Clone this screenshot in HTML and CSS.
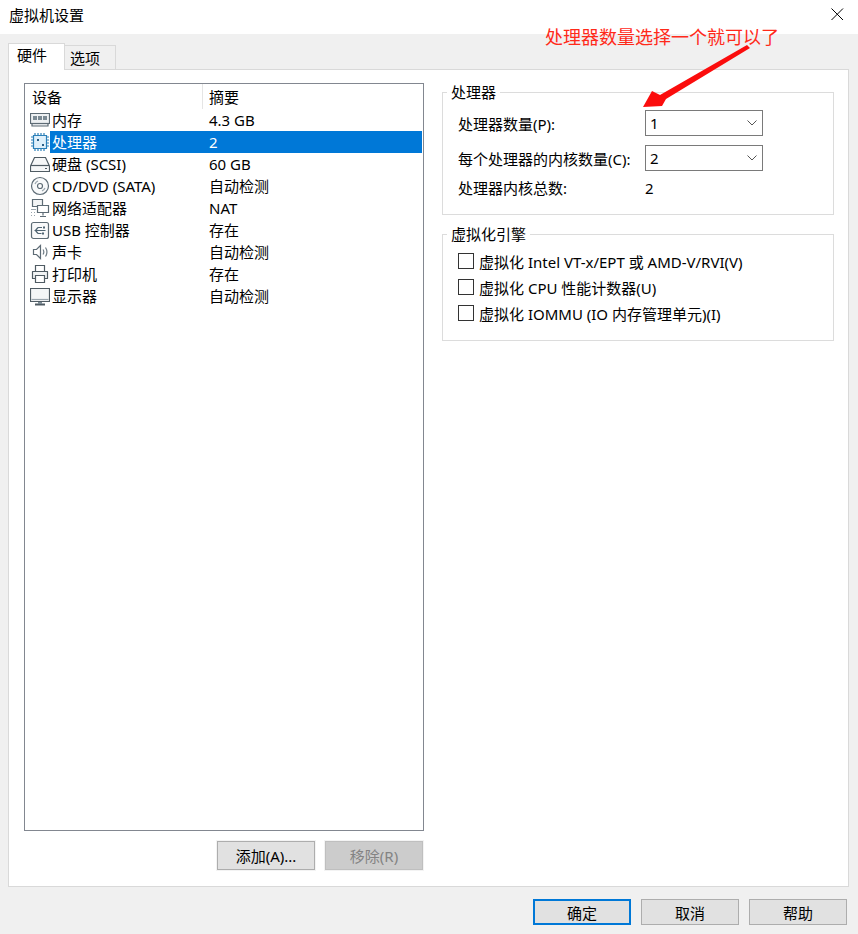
FILE: index.html
```html
<!DOCTYPE html>
<html lang="zh-CN">
<head>
    <meta charset="UTF-8">
    <title>虚拟机设置</title>
    <link rel="stylesheet" href="styles.css">
</head>
<body>
    <header class="titlebar">
        <span class="title">虚拟机设置</span>
        <svg class="close" width="14" height="14" viewBox="0 0 14 14"><path d="M1.5 1.5L13 13M13 1.5L1.5 13" stroke="#000" fill="none"/></svg>
    </header>

    <div class="tabs">
        <div class="tab tab-active">硬件</div>
        <div class="tab">选项</div>
    </div>

    <main class="panel">
        <section class="left-col">
            <div class="device-list">
                <div class="list-head">
                    <div class="head-name">设备</div>
                    <div class="head-sum">摘要</div>
                </div>
                <div class="row">
                    <svg class="icon" viewBox="0 0 20 20"><path d="M.5 3.500h19v10h-1.500v2.500H2V13.500H.5z" fill="#eef1f3" stroke="#5d6b75"/><path d="M3 6h4v4H3zM8 6h4v4H8zM13 6h4v4h-4z" fill="#7b8a94"/><path d="M1 13.500h18" stroke="#5d6b75"/></svg>
                    <span class="name">内存</span><span class="sum">4.3 GB</span>
                </div>
                <div class="row row-sel">
                    <svg class="icon" viewBox="0 0 20 20"><path d="M3.500 3.500h13v13h-13z" fill="#dff0fb" stroke="#2b7fb8"/><path d="M5 1v2M8 1v2M11 1v2M14 1v2M5 17v2M8 17v2M11 17v2M14 17v2M1 5h2M1 8h2M1 11h2M1 14h2M17 5h2M17 8h2M17 11h2M17 14h2" stroke="#2b7fb8"/><path d="M7 7h2v2H7zM12 12h2v2h-2z" fill="#2b5f86"/></svg>
                    <span class="name">处理器</span><span class="sum">2</span>
                </div>
                <div class="row">
                    <svg class="icon" viewBox="0 0 20 20"><path d="M4.500 3.500h11L19.500 12v5.500H.5V12z" fill="#f6f7f8" stroke="#4f5b63"/><path d="M1 11.500h18" stroke="#4f5b63"/><path d="M15 14.500h2" stroke="#4f5b63"/></svg>
                    <span class="name">硬盘 (SCSI)</span><span class="sum">60 GB</span>
                </div>
                <div class="row">
                    <svg class="icon" viewBox="0 0 20 20"><circle cx="10" cy="10" r="8.500" fill="#f8f9fa" stroke="#5d6b75"/><circle cx="10" cy="10" r="2.500" fill="#fff" stroke="#5d6b75"/><path d="M5 8a5.500 5.500 0 0 1 3-3M15 12a5.500 5.500 0 0 1-3 3" stroke="#9aa5ad" fill="none"/></svg>
                    <span class="name">CD/DVD (SATA)</span><span class="sum">自动检测</span>
                </div>
                <div class="row">
                    <svg class="icon" viewBox="0 0 20 20"><path d="M2.500 1.500h10v7h-10z" fill="#f2f4f5" stroke="#5d6b75"/><path d="M7.500 7.500h11v7h-11z" fill="#fff" stroke="#5d6b75"/><path d="M13 14.500v3M10 18.500h6" stroke="#5d6b75"/><path d="M1 11.500h5M1 14.500h1M4 14.500h1M1 17.500h1M4 17.500h1" stroke="#9aa5ad"/></svg>
                    <span class="name">网络适配器</span><span class="sum">NAT</span>
                </div>
                <div class="row">
                    <svg class="icon" viewBox="0 0 20 20"><rect x="1.500" y="2.500" width="17" height="16" rx="2" fill="#f8f9fa" stroke="#5d6b75"/><path d="M4.500 10.500h11M8 7.500h4M8 7.500l-2.500 3M8 13.500h3.500M8 13.500l-2.500-3" stroke="#4f6472" fill="none"/><path d="M13 6.500h2v2h-2zM12 12.500h2v2h-2z" fill="#4f6472"/></svg>
                    <span class="name">USB 控制器</span><span class="sum">存在</span>
                </div>
                <div class="row">
                    <svg class="icon" viewBox="0 0 20 20"><path d="M3.500 7.500h3l4-4v13l-4-4h-3z" fill="#fff" stroke="#5d6b75"/><path d="M13 7.500c1 1.500 1 3.500 0 5M15.500 5.500c1.800 2.800 1.800 6.200 0 9" stroke="#6e7b84" fill="none"/></svg>
                    <span class="name">声卡</span><span class="sum">自动检测</span>
                </div>
                <div class="row">
                    <svg class="icon" viewBox="0 0 20 20"><path d="M5.500 1.500h9v6h-9z" fill="#fff" stroke="#4f5b63"/><path d="M2.500 7.500h15v7h-15z" fill="#f2f4f5" stroke="#4f5b63" stroke-linejoin="round"/><path d="M5.500 11.500h9v7h-9z" fill="#fff" stroke="#4f5b63"/></svg>
                    <span class="name">打印机</span><span class="sum">存在</span>
                </div>
                <div class="row">
                    <svg class="icon" viewBox="0 0 20 20"><path d="M.5 2.500h19v13H.5z" fill="#f4f6f7" stroke="#4f5b63"/><path d="M1.500 13.500h17" stroke="#9aa5ad"/><path d="M5 18.500h10" stroke="#4f5b63" stroke-width="2"/><path d="M8 16h4v2H8z" fill="#7b8a94"/></svg>
                    <span class="name">显示器</span><span class="sum">自动检测</span>
                </div>
            </div>
            <div class="list-buttons">
                <button class="btn">添加(A)...</button>
                <button class="btn btn-off">移除(R)</button>
            </div>
        </section>

        <section class="right-col">
            <fieldset class="group group-cpu">
                <legend>处理器</legend>
                <div class="cpu-grid">
                    <span>处理器数量(P):</span>
                    <div class="combo"><span>1</span><svg width="10" height="6" viewBox="0 0 10 6"><path d="M.5.5L5 5 9.500.5" stroke="#555" fill="none"/></svg></div>
                    <span>每个处理器的内核数量(C):</span>
                    <div class="combo"><span>2</span><svg width="10" height="6" viewBox="0 0 10 6"><path d="M.5.5L5 5 9.500.5" stroke="#555" fill="none"/></svg></div>
                    <span>处理器内核总数:</span>
                    <span>2</span>
                </div>
            </fieldset>
            <fieldset class="group group-virt">
                <legend>虚拟化引擎</legend>
                <label class="check"><span class="box"></span>虚拟化 Intel VT-x/EPT 或 AMD-V/RVI(V)</label>
                <label class="check"><span class="box"></span>虚拟化 CPU 性能计数器(U)</label>
                <label class="check"><span class="box"></span>虚拟化 IOMMU (IO 内存管理单元)(I)</label>
            </fieldset>
        </section>
    </main>

    <footer class="footer">
        <button class="btn btn-default">确定</button>
        <button class="btn btn-plain">取消</button>
        <button class="btn btn-plain">帮助</button>
    </footer>

    <!-- annotation drawn on top of the screenshot -->
    <div class="note">处理器数量选择一个就可以了</div>
    <svg class="note-arrow" width="120" height="70" viewBox="0 0 120 70"><path d="M107 4L110 7 26 58 22 65 3 66 12 50 20 54z" fill="#fb0d0d"/></svg>
</body>
</html>
```

FILE: styles.css
```css
* {
    box-sizing: border-box;
}
body {
    margin: 0;
    width: 858px;
    height: 934px;
    overflow: hidden;
    position: relative;
    background-color: #f0f0f0;
    font-family: "Noto Sans", "Noto Sans CJK SC", sans-serif;
    font-size: 15px;
    color: #000;
}
.titlebar {
    height: 34px;
    background-color: #fff;
    display: flex;
    align-items: center;
    justify-content: space-between;
    padding: 0 14px 6px 9px;
}
.tabs {
    display: flex;
    align-items: flex-end;
    height: 35px;
    padding-left: 8px;
}
.tab {
    width: 51px;
    height: 24px;
    background-color: #f0f0f0;
    border: 1px solid #d9d9d9;
    border-bottom: none;
    border-left: none;
    padding-left: 5px;
    line-height: 24px;
}
.tab-active {
    position: relative;
    z-index: 1;
    width: 57px;
    height: 27px;
    margin-bottom: -1px;
    background-color: #fff;
    border-left: 1px solid #d9d9d9;
    padding-left: 8px;
    line-height: 23px;
}
.panel {
    width: 841px;
    height: 818px;
    margin-left: 8px;
    background-color: #fff;
    border: 1px solid #d9d9d9;
    display: flex;
    padding: 13px 15px 15px 15px;
}
.left-col {
    width: 400px;
    flex-shrink: 0;
}
.device-list {
    height: 748px;
    border: 1px solid #828790;
}
.list-head {
    display: flex;
    height: 25px;
    line-height: 26px;
}
.head-name {
    width: 178px;
    padding-left: 7px;
    border-right: 1px solid #e5e5e5;
}
.head-sum {
    padding-left: 6px;
}
.row {
    display: flex;
    align-items: center;
    height: 22px;
    padding-left: 5px;
    white-space: nowrap;
}
.icon {
    width: 20px;
    height: 20px;
    flex-shrink: 0;
    stroke-width: 1.2;
}
.name {
    width: 159px;
    height: 22px;
    line-height: 22px;
    padding-left: 2px;
}
.sum {
    flex: 1;
    height: 22px;
    line-height: 22px;
}
.row-sel {
    margin-right: 1px;
}
.row-sel .name, .row-sel .sum {
    background-color: #0078d7;
    color: #fff;
}
.list-buttons {
    display: flex;
    justify-content: flex-end;
    gap: 10px;
    margin-top: 10px;
    padding-right: 1px;
}
.btn {
    width: 98px;
    height: 29px;
    padding: 0;
    background-color: #e1e1e1;
    border: 1px solid #adadad;
    outline: 1px solid #f3f3f3;
    font-family: inherit;
    font-size: 15px;
    color: #000;
}
.btn-off {
    background-color: #cccccc;
    border-color: #bfbfbf;
    color: #838383;
}
.right-col {
    margin-left: 18px;
    width: 392px;
}
.group {
    margin: 0;
    padding: 0;
    width: 392px;
    border: 1px solid #dcdcdc;
}
.group legend {
    margin-left: 4px;
    padding: 0 4px;
    line-height: 20px;
}
.group-cpu {
    height: 133px;
    margin-top: -1px;
}
.cpu-grid {
    display: grid;
    grid-template-columns: 187px 118px;
    grid-template-rows: 26px 26px 15px;
    row-gap: 9px;
    align-items: center;
    padding: 8px 0 0 15px;
    white-space: nowrap;
}
.combo {
    height: 26px;
    border: 1px solid #7a7a7a;
    display: flex;
    align-items: center;
    justify-content: space-between;
    padding: 0 5px 0 4px;
    background-color: #fff;
}
.group-virt {
    height: 117px;
    margin-top: 9px;
    padding-top: 4px;
}
.check {
    display: flex;
    align-items: center;
    height: 26px;
    margin-left: 15px;
    white-space: nowrap;
}
.box {
    width: 16px;
    height: 16px;
    margin-right: 5px;
    background-color: #fff;
    border: 1px solid #333;
}
.footer {
    display: flex;
    justify-content: flex-end;
    gap: 10px;
    padding: 12px 11px 0 0;
}
.footer .btn {
    height: 26px;
    outline: none;
}
.footer .btn-default {
    border: 2px solid #0078d7;
}
.note {
    position: absolute;
    left: 545px;
    top: 24px;
    font-size: 18px;
    line-height: 26px;
    color: #ff2a1a;
    white-space: nowrap;
}
.note-arrow {
    position: absolute;
    left: 640px;
    top: 41px;
}
```
